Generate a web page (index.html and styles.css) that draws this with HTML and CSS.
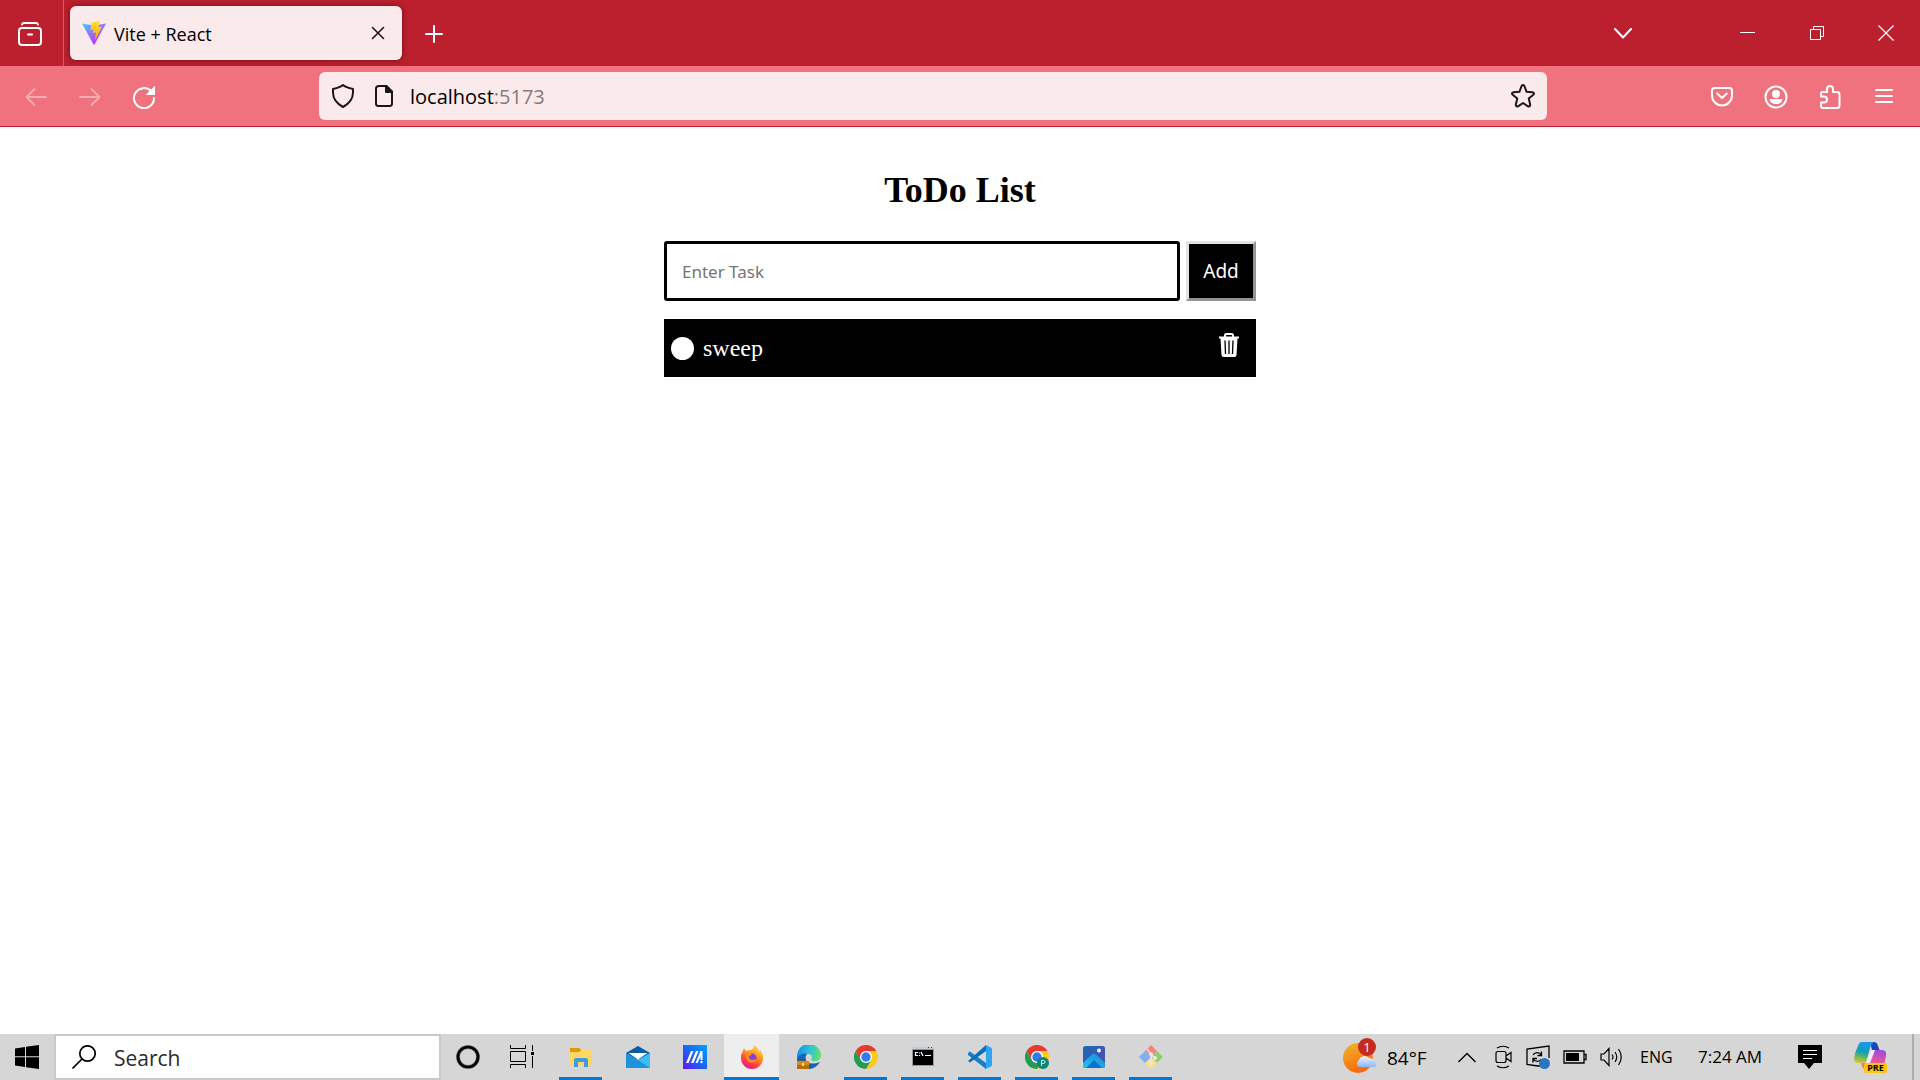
FILE: index.html
```html
<!DOCTYPE html>
<html lang="en">
<head>
<meta charset="utf-8">
<meta name="viewport" content="width=device-width, initial-scale=1">
<title>Vite + React</title>
<link rel="stylesheet" href="styles.css">
</head>
<body>
<header class="browser">
  <div class="tabbar">
    <button class="icon-btn library" aria-label="Firefox View">
      <svg width="24" height="24" viewBox="0 0 24 24" fill="none" stroke="#fff" stroke-width="2" stroke-linecap="round"><rect x="1" y="6" width="22" height="17" rx="3"/><path d="M4 2.500Q4.500 1 6 1H18Q19.500 1 20 2.500M10 12.500H14"/></svg>
    </button>
    <div class="tab">
      <svg width="24" height="24" viewBox="0 0 24 24">
        <defs>
          <linearGradient id="vite" x1="0" y1="0" x2=".6" y2="1"><stop offset="0" stop-color="#41d1ff"/><stop offset=".45" stop-color="#8a7cff"/><stop offset="1" stop-color="#bd34fe"/></linearGradient>
          <linearGradient id="bolt" x1="0" y1="0" x2="0" y2="1"><stop offset="0" stop-color="#ffdd35"/><stop offset="1" stop-color="#ffa800"/></linearGradient>
        </defs>
        <path d="M0 2.500L12 4.500L24 2.500L12.500 23.500Q12 24 11.500 23.500Z" fill="url(#vite)"/>
        <path d="M9.500 1.500L17.500 0L16.500 6L20 5.500L13 19.500L14 11.500L10.500 12L11.500 8.500L8.500 9Z" fill="url(#bolt)"/>
      </svg>
      <span class="tab-title">Vite + React</span>
      <button class="icon-btn tab-close" aria-label="Close tab">
        <svg width="14" height="14" viewBox="0 0 14 14" fill="none" stroke="#1b1718" stroke-width="1.600" stroke-linecap="round"><path d="M1.500 1.500L12.500 12.500M12.500 1.500L1.500 12.500"/></svg>
      </button>
    </div>
    <button class="icon-btn new-tab" aria-label="New tab">
      <svg width="18" height="18" viewBox="0 0 18 18" fill="none" stroke="#fff" stroke-width="2" stroke-linecap="round"><path d="M9 1V17M1 9H17"/></svg>
    </button>
    <div class="window-controls">
      <button class="icon-btn all-tabs" aria-label="List all tabs">
        <svg width="18" height="11" viewBox="0 0 18 11" fill="none" stroke="#fff" stroke-width="2" stroke-linecap="round" stroke-linejoin="round"><path d="M1 1L9 9.500L17 1"/></svg>
      </button>
      <button class="icon-btn" aria-label="Minimize"><svg width="16" height="16" viewBox="0 0 16 16" stroke="#fff"><path d="M0 7.500H15"/></svg></button>
      <button class="icon-btn" aria-label="Restore"><svg width="14" height="14" viewBox="0 0 14 14" fill="none" stroke="#fff"><path d="M.5 3.500H10.500V13.500H.5ZM3.500 3.500V.5H13.500V10.500H10.500"/></svg></button>
      <button class="icon-btn" aria-label="Close"><svg width="16" height="16" viewBox="0 0 16 16" stroke="#fff" stroke-width="1.200"><path d="M.5 .5L15.500 15.500M15.500 .5L.5 15.500"/></svg></button>
    </div>
  </div>
  <div class="toolbar">
    <div class="tool-group">
      <button class="icon-btn dim" aria-label="Back"><svg width="22" height="20" viewBox="0 0 22 20" fill="none" stroke="#fff" stroke-width="1.800" stroke-linecap="round" stroke-linejoin="round"><path d="M21 10H1.500M9.500 2L1.500 10L9.500 18"/></svg></button>
      <button class="icon-btn dim" aria-label="Forward"><svg width="22" height="20" viewBox="0 0 22 20" fill="none" stroke="#fff" stroke-width="1.800" stroke-linecap="round" stroke-linejoin="round"><path d="M1 10H20.500M12.500 2L20.500 10L12.500 18"/></svg></button>
      <button class="icon-btn" aria-label="Reload"><svg width="24" height="24" viewBox="0 0 24 24" fill="none" stroke="#fff" stroke-width="2" stroke-linecap="round"><path d="M19.500 6.500A10 10 0 1 0 22 13"/><path d="M22.500 2V9.500H15Z" fill="#fff" stroke-width="1" stroke-linejoin="round"/></svg></button>
    </div>
    <div class="urlbar">
      <svg width="24" height="24" viewBox="0 0 24 24" fill="none" stroke="#1b1718" stroke-width="2" stroke-linejoin="round"><path d="M12 1Q14.500 3.200 22 5V8.500Q22 17.500 12 23Q2 17.500 2 8.500V5Q9.500 3.200 12 1Z"/></svg>
      <svg width="18" height="22" viewBox="0 0 18 22" fill="none" stroke="#1b1718" stroke-width="2" stroke-linejoin="round"><path d="M4 1H11.500L17 6.500V18.500Q17 21 14.500 21H3.500Q1 21 1 18.500V3.500Q1 1 4 1Z"/><path d="M11 1V7H17Z" fill="#1b1718"/></svg>
      <span class="url">localhost<span class="port">:5173</span></span>
      <button class="icon-btn bookmark" aria-label="Bookmark this page"><svg width="24" height="24" viewBox="0 0 24 24" fill="none" stroke="#1b1718" stroke-width="2" stroke-linejoin="round"><path d="M10.600 2Q12 0 13.400 2L15.500 7.700L21.500 8.200Q24 8.900 22.300 10.700L17.700 14.600L19.200 20.500Q19.300 23 17 22.300L12 19L7 22.300Q4.700 23 4.800 20.500L6.300 14.600L1.700 10.700Q0 8.900 2.500 8.200L8.500 7.700Z"/></svg></button>
    </div>
    <div class="tool-group">
      <button class="icon-btn" aria-label="Save to Pocket"><svg width="22" height="22" viewBox="0 0 22 22" fill="none" stroke="#fff" stroke-width="2" stroke-linecap="round" stroke-linejoin="round"><path d="M3.500 2H18.500Q21 2 21 4.500V9.500A10 10 0 0 1 1 9.500V4.500Q1 2 3.500 2Z"/><path d="M6.200 7.500L11 12L15.800 7.500"/></svg></button>
      <button class="icon-btn" aria-label="Account"><svg width="24" height="24" viewBox="0 0 24 24" fill="none" stroke="#fff" stroke-width="2"><circle cx="12" cy="12" r="10.500"/><circle cx="12" cy="9" r="4" fill="#fff" stroke="none"/><path d="M5.500 14H18.500Q18 19 12 19Q6 19 5.500 14Z" fill="#fff" stroke="none"/></svg></button>
      <button class="icon-btn" aria-label="Extensions"><svg width="22" height="24" viewBox="0 0 22 24" fill="none" stroke="#fff" stroke-width="2" stroke-linejoin="round"><path d="M3.500 7H8V4A3 3 0 0 1 14 4V7H18Q20.500 7 20.500 9.500V20.500Q20.500 23 18 23H4Q2 23 2 21V17.500H5A3 3 0 0 0 5 11.500H2V8.500Q2 7 3.500 7Z"/></svg></button>
      <button class="icon-btn" aria-label="Open menu"><svg width="18" height="18" viewBox="0 0 18 18" stroke="#fff" stroke-width="2" stroke-linecap="round"><path d="M1 2H17M1 8H17M1 14H17"/></svg></button>
    </div>
  </div>
</header>

<main class="page">
  <section class="todo">
    <h1 class="todo-title">ToDo List</h1>
    <form class="todo-form">
      <input class="todo-input" type="text" placeholder="Enter Task" aria-label="Enter Task">
      <button class="todo-add" type="button">Add</button>
    </form>
    <ul class="todo-list">
      <li class="todo-item">
        <input class="todo-check" type="checkbox" id="task-1">
        <label class="todo-label" for="task-1">sweep</label>
        <button class="icon-btn todo-delete" aria-label="Delete sweep"><svg width="22" height="24" viewBox="0 0 22 24"><path d="M7 4V2.500Q7 1 8.500 1H13.500Q15 1 15 2.500V4" fill="none" stroke="#fff" stroke-width="2"/><path d="M1 3.500H21V5.500H19.500L18.500 22Q18.300 24 16.500 24H5.500Q3.700 24 3.500 22L2.500 5.500H1Z" fill="#fff"/><path d="M7 7.500L7.500 21M11 7.500V21M15 7.500L14.500 21" stroke="#000" stroke-width="1.300"/></svg></button>
      </li>
    </ul>
  </section>
</main>

<footer class="taskbar">
  <button class="icon-btn start" aria-label="Start"><svg width="24" height="24" viewBox="0 0 24 24"><path d="M0 3.400L10 2V11.200H0ZM11 1.800L24 0V11.200H11ZM0 12.200H10V22L0 20.600ZM11 12.200H24V24L11 22.200Z"/></svg></button>
  <label class="search">
    <svg width="24" height="24" viewBox="0 0 24 24" fill="none" stroke="#000" stroke-width="1.700"><circle cx="15.500" cy="8.500" r="7.700"/><path d="M10 14L.5 23.500"/></svg>
    <input class="search-input" type="text" placeholder="Search" aria-label="Search">
  </label>
  <div class="shell-buttons">
    <button class="icon-btn" aria-label="Cortana"><svg width="24" height="24" viewBox="0 0 24 24" fill="none"><circle cx="12" cy="12" r="10" stroke="#777" stroke-width="4"/><circle cx="12" cy="12" r="10" stroke="#000" stroke-width="2.600"/></svg></button>
    <button class="icon-btn" aria-label="Task View"><svg width="24" height="24" viewBox="0 0 24 24" fill="none" stroke="#000"><path d="M.5 0V3.500H15.500V0M.5 6.500H15.500V16.500H.5ZM.5 23V19.500H15.500V23M22.500 0V6M22.500 11V23"/><path d="M21 7H24V10H21Z" fill="#000" stroke="none"/></svg></button>
  </div>
  <div class="apps">
    <button class="app running" aria-label="File Explorer"><svg width="24" height="24" viewBox="0 0 24 24"><path d="M1 3H10L12 5V9H1Z" fill="#dc9b00"/><path d="M1 7H10L13 5H23V21H1Z" fill="#ffd764"/><path d="M5 22V15Q5 13 7 13H17Q19 13 19 15V22H15V17H9V22Z" fill="#409ae1"/></svg></button>
    <button class="app" aria-label="Mail"><svg width="24" height="24" viewBox="0 0 24 24"><path d="M0 8L12 1L24 8V14H0Z" fill="#0a5ca8"/><path d="M0 8L12 15L24 8V23H0Z" fill="#28a4e4"/><path d="M2.500 8H21.500L12 14.500Z" fill="#fff"/><path d="M12 15L24 23H0V8Z" fill="#1e93dc"/><path d="M12 15L24 8V23Z" fill="#39c0f0"/></svg></button>
    <button class="app" aria-label="MyASUS"><svg width="24" height="24" viewBox="0 0 24 24"><defs><linearGradient id="asus" x1="0" y1="1" x2="1" y2="0"><stop offset="0" stop-color="#6510f5"/><stop offset=".5" stop-color="#1767f5"/><stop offset="1" stop-color="#00a3ff"/></linearGradient></defs><path d="M0 0H24V24H0Z" fill="url(#asus)"/><path d="M3 18L8 6H10.500L5.500 18ZM8 18L13 6H15.500L10.500 18ZM12.500 18L17.500 6H19.500V15H17.500V11.500L14.500 18Z" fill="#fff"/><circle cx="18.500" cy="17" r="1.200" fill="#fff"/></svg></button>
    <button class="app running active" aria-label="Firefox"><svg width="24" height="24" viewBox="0 0 24 24"><defs><linearGradient id="fox" x1=".8" y1="0" x2=".3" y2="1"><stop offset="0" stop-color="#ffe33d"/><stop offset=".4" stop-color="#ff9a1f"/><stop offset=".7" stop-color="#ff463f"/><stop offset="1" stop-color="#e41586"/></linearGradient></defs><path d="M4 3L6 6Q8 5 11 5Q14 4 14 0Q18 2 19 7L20 5Q23 8 23 13A11 11 0 0 1 1 13Q1 9 2 7V9Q3 5 4 3Z" fill="url(#fox)"/><circle cx="12" cy="13" r="4.500" fill="#8b3de0"/><path d="M5 7Q9 7 12 9Q11 11 9 11Q8 14 12 15Q15 14 17 15Q14 19 9 17Q6 15 6 11Z" fill="#ff8b20"/></svg></button>
    <button class="app" aria-label="Edge"><svg width="24" height="24" viewBox="0 0 24 24"><defs><linearGradient id="edge" x1="0" y1=".4" x2="1" y2=".6"><stop offset="0" stop-color="#188fdc"/><stop offset=".5" stop-color="#31c3dc"/><stop offset="1" stop-color="#66e25e"/></linearGradient></defs><path d="M0 12A12 12 0 0 1 24 10Q24 16 18 16Q14 16 14 14Q16 13 14 10Q9 7 5 14L1 19Z" fill="url(#edge)"/><path d="M0 13Q4 7 10 9Q7 13 10 17Q15 20 23 17Q18 25 9 24L0 20Z" fill="#1366b4"/><path d="M0 16H12V24H0Z" fill="#b96b08"/><path d="M0 16H12V20H0Z" fill="#d98b19"/><path d="M5 18H7V21H5Z" fill="#ffdf79"/><path d="M4 16V14.500H8V16" fill="none" stroke="#76430a"/></svg></button>
    <button class="app running" aria-label="Chrome"><svg width="24" height="24" viewBox="0 0 24 24"><path d="M12 12V6H22.400A12 12 0 0 1 12 24L17.200 15Z" fill="#fdca1c"/><path d="M1.600 6A12 12 0 0 1 22.400 6H12V12L6.800 15Z" fill="#e33b2e"/><path d="M1.600 6L6.800 15L12 12L17.200 15L12 24A12 12 0 0 1 1.600 6Z" fill="#239c51"/><circle cx="12" cy="12" r="6" fill="#fff"/><circle cx="12" cy="12" r="4.700" fill="#337bea"/></svg></button>
    <button class="app running" aria-label="Command Prompt"><svg width="24" height="24" viewBox="0 0 24 24"><path d="M1 2H23V21H1Z" fill="#919aa5"/><path d="M1 2H23V4H1Z" fill="#c3ccd6"/><path d="M2 5H22V20H2Z" fill="#000"/><path d="M17 2.500H18M20 2.500H21" stroke="#345"/><path d="M7 7.500H4.500V10.500H7M8.500 7.500V8.500M8.500 10V11M10 7L12 11M14 10.500H20" fill="none" stroke="#fff" stroke-width="1.200"/></svg></button>
    <button class="app running" aria-label="Visual Studio Code"><svg width="24" height="24" viewBox="0 0 24 24"><path d="M0 8L2 6.500L18 18V24L0 10Z" fill="#167fc7"/><path d="M0 16L18 0V6L2 17.500Z" fill="#0b71b6"/><path d="M17 0Q18 0 19 .5L23 2.500Q24 3 24 4V20Q24 21 23 21.500L19 23.500Q18 24 17 23.500Q18 23 18 22V2Q18 1 17 0Z" fill="#2ca6f2"/></svg></button>
    <button class="app running" aria-label="Chrome, second profile"><svg width="24" height="24" viewBox="0 0 24 24"><path d="M12 12V6H22.400A12 12 0 0 1 12 24L17.200 15Z" fill="#fdca1c"/><path d="M1.600 6A12 12 0 0 1 22.400 6H12V12L6.800 15Z" fill="#e33b2e"/><path d="M1.600 6L6.800 15L12 12L17.200 15L12 24A12 12 0 0 1 1.600 6Z" fill="#239c51"/><circle cx="12" cy="12" r="6" fill="#fff"/><circle cx="12" cy="12" r="4.700" fill="#337bea"/><circle cx="18" cy="18" r="6" fill="#0b8577"/><path d="M16.500 21V15.500H18.500A1.500 1.500 0 0 1 18.500 18.500H16.500" fill="none" stroke="#d9f0ed"/></svg></button>
    <button class="app running" aria-label="Photos"><svg width="24" height="24" viewBox="0 0 24 24"><defs><linearGradient id="photo" x1="0" y1="0" x2="1" y2="1"><stop offset="0" stop-color="#1868b8"/><stop offset="1" stop-color="#5b4cad"/></linearGradient><linearGradient id="hill" x1="0" y1="1" x2="1" y2="0"><stop offset="0" stop-color="#27c2f2"/><stop offset="1" stop-color="#168bdd"/></linearGradient></defs><rect x="1" y="1" width="22" height="22" rx="2.500" fill="url(#photo)"/><path d="M1 18L10 9.500Q12 8 14 9.500L23 18V20.500Q23 23 20.500 23H3.500Q1 23 1 20.500Z" fill="url(#hill)"/><path d="M4 23L12 15L20 23Z" fill="#0872cc"/><circle cx="17" cy="5.500" r="2" fill="#eef5ff"/></svg></button>
    <button class="app running" aria-label="Git Bash"><svg width="24" height="24" viewBox="0 0 24 24"><path d="M12 0L18 6L12 12L6 6Z" fill="#f58080"/><path d="M18 6L24 12L18 18L12 12Z" fill="#8fcf69"/><path d="M12 12L18 18L12 24L6 18Z" fill="#fbdf80"/><path d="M6 6L12 12L6 18L0 12Z" fill="#82adf7"/><path d="M8 4L12 9V19M12 10L16 13" fill="none" stroke="#e7e7e7" stroke-width="1.600"/><circle cx="12" cy="9" r="2" fill="#e7e7e7"/><circle cx="12" cy="18" r="2" fill="#e7e7e7"/><circle cx="16" cy="13" r="2" fill="#e7e7e7"/></svg></button>
  </div>
  <div class="tray">
    <button class="weather" aria-label="Weather, 84°F, 1 alert">
      <span class="weather-icon">
        <svg width="34" height="34" viewBox="0 0 34 34"><defs><linearGradient id="sun" x1="0" y1="0" x2=".4" y2="1"><stop offset="0" stop-color="#f3b62c"/><stop offset="1" stop-color="#f76b0c"/></linearGradient><linearGradient id="cloud" x1="0" y1="0" x2="0" y2="1"><stop offset="0" stop-color="#eaf3ff"/><stop offset="1" stop-color="#8eb6f4"/></linearGradient></defs><circle cx="15" cy="18" r="15" fill="url(#sun)"/><path d="M16 27A4 4 0 0 1 16 20A6 6 0 0 1 26 18A5 5 0 0 1 31 21A3 3 0 0 1 30 27Z" fill="url(#cloud)"/></svg>
        <span class="badge">1</span>
      </span>
      <span class="temp">84°F</span>
    </button>
    <button class="icon-btn caret" aria-label="Show hidden icons"><svg width="18" height="11" viewBox="0 0 18 11" fill="none" stroke="#000" stroke-width="1.400"><path d="M.5 10L9 1.500L17.500 10"/></svg></button>
    <div class="status">
      <svg width="18" height="24" viewBox="0 0 18 24" fill="none" stroke="#000" stroke-width="1.200"><path d="M2 3Q8 -.5 14 3M2 21Q8 24.500 14 21M3 6.500H9Q11 6.500 11 8.500V15.500Q11 17.500 9 17.500H3Q1 17.500 1 15.500V8.500Q1 6.500 3 6.500ZM11 11L16 7.500V16.500L11 13"/></svg>
      <svg width="24" height="24" viewBox="0 0 24 24" fill="none" stroke="#000" stroke-width="1.300"><path d="M14 21H12L1 19.500V4L23 1V13"/><path d="M7 10A5 5 0 0 1 15.500 10M15.500 6.500V10.500H11.500M15.500 14A5 5 0 0 1 7 14M7 17.500V13.500H11"/><circle cx="18.500" cy="18.500" r="5.500" fill="#2a75c0" stroke="none"/></svg>
      <svg width="24" height="14" viewBox="0 0 24 14" fill="none" stroke="#000" stroke-width="1.300"><path d="M1 1H21V13H1ZM21 4.500H23V9.500H21"/><path d="M3 3H16V11H3Z" fill="#000" stroke="none"/></svg>
      <svg width="24" height="20" viewBox="0 0 24 20" fill="none" stroke="#000" stroke-width="1.200"><path d="M1 7H4L9 1.500V18.500L4 13H1ZM12 7.500Q14 10 12 12.500M15 5Q18.500 10 15 15M18.500 2Q24 10 18.500 18"/></svg>
    </div>
    <span class="lang">ENG</span>
    <time class="clock">7:24 AM</time>
    <button class="icon-btn notify" aria-label="Notifications"><svg width="24" height="24" viewBox="0 0 24 24"><path d="M0 0H24V18H16L11 24L6 18H0Z"/><path d="M5 5.500H19M5 9.500H19M5 13.500H14" stroke="#fff" stroke-width="1.200"/></svg></button>
    <button class="icon-btn copilot" aria-label="Copilot preview">
      <svg width="34" height="30" viewBox="0 0 34 30"><defs><linearGradient id="co1" x1=".3" y1="0" x2=".1" y2="1"><stop offset="0" stop-color="#1597ef"/><stop offset=".45" stop-color="#179fb0"/><stop offset=".7" stop-color="#70bb58"/><stop offset="1" stop-color="#e9c52a"/></linearGradient><linearGradient id="co2" x1=".6" y1="0" x2=".3" y2="1"><stop offset="0" stop-color="#a249de"/><stop offset=".6" stop-color="#f15993"/><stop offset="1" stop-color="#ff8c54"/></linearGradient></defs><path d="M16 0H20Q23 0 24 4L25.500 8H18Z" fill="#1648b5"/><path d="M8 0H20Q17 2 16 6L13 17Q12 21 8 21H4Q0 21 0 16Q1 10 4 4Q5 0 8 0Z" fill="url(#co1)"/><path d="M20 8H28Q33 8 32 14L30 23Q29 28 25 28H12Q8 27 7 21Q12 22 14 18L16 11Q17 8 20 8Z" fill="url(#co2)"/><path d="M17 8H21L16 21H12Z" fill="#f4eef4"/></svg>
      <span class="pre">PRE</span>
    </button>
    <span class="peek"></span>
  </div>
</footer>
</body>
</html>
```
FILE: styles.css
```css
* { box-sizing: border-box; }

body {
  margin: 0;
  min-height: 100vh;
  display: flex;
  flex-direction: column;
  background: #fff;
  color: #000;
  font-family: "Open Sans", "Noto Sans", sans-serif;
}

svg { display: block; flex: none; }

button, input { font-family: inherit; }

.icon-btn {
  display: flex;
  align-items: center;
  justify-content: center;
  padding: 0;
  border: 0;
  background: none;
}

/* Browser window */
.tabbar {
  display: flex;
  align-items: center;
  height: 66px;
  background: #bc202e;
}

.library {
  width: 64px;
  height: 66px;
  padding: 2px 4px 0 0;
  border-right: 1px solid #d1606a;
}

.tab {
  display: flex;
  align-items: center;
  width: 332px;
  height: 54px;
  margin-left: 6px;
  padding: 0 12px;
  border-radius: 6px;
  background: #faeaeb;
  box-shadow: 0 0 6px rgba(70, 0, 8, .6);
}

.tab-title {
  flex: 1;
  margin-left: 8px;
  padding-top: 2px;
  font-size: 18px;
  line-height: 24px;
}

.tab-close { width: 24px; height: 24px; }

.new-tab { width: 64px; height: 54px; padding-top: 2px; }

.window-controls {
  display: flex;
  margin-left: auto;
}

.window-controls .icon-btn { width: 69px; height: 66px; }

.window-controls .all-tabs { width: 60px; margin-right: 60px; }

.toolbar {
  display: flex;
  align-items: center;
  justify-content: space-between;
  height: 61px;
  padding: 0 9px;
  background: #f0727e;
  border-bottom: 1px solid #bc202e;
}

.tool-group { display: flex; padding-top: 2px; }

.tool-group .icon-btn { width: 54px; height: 48px; }

.dim { opacity: .4; }

.urlbar {
  flex: 1;
  display: flex;
  align-items: center;
  height: 48px;
  margin: 0 148px;
  padding: 0 12px;
  gap: 20px;
  border-radius: 6px;
  background: #faeaeb;
}

.url {
  flex: 1;
  margin-left: -3px;
  padding-top: 2px;
  font-size: 20px;
  line-height: 28px;
}

.port { color: #85797b; }

.bookmark { width: 24px; height: 24px; }

/* Todo page */
.page {
  flex: 1;
  padding: 42px 16px;
}

.todo {
  width: 100%;
  max-width: 592px;
  margin: 0 auto;
  font-family: "Liberation Serif", "Times New Roman", serif;
}

.todo-title {
  margin: 0 0 30px;
  font-size: 36px;
  line-height: 42px;
  text-align: center;
}

.todo-form {
  display: flex;
  gap: 6px;
  margin-bottom: 18px;
}

.todo-input {
  flex: 1;
  min-width: 0;
  height: 60px;
  padding: 0 15px;
  border: 3px solid #000;
  border-radius: 3px;
  font-family: "Noto Sans", sans-serif;
  font-size: 17px;
}

.todo-input::placeholder { color: #757575; opacity: 1; }

.todo-add {
  width: 70px;
  height: 60px;
  padding: 0;
  border: 3px solid;
  border-color: #e3e3e3 #949494 #949494 #e3e3e3;
  background: #000;
  color: #fff;
  font-family: "Noto Sans", sans-serif;
  font-size: 19px;
}

.todo-list {
  margin: 0;
  padding: 0;
  list-style: none;
}

.todo-item {
  display: flex;
  align-items: center;
  height: 58px;
  padding: 0 16px 0 7px;
  background: #000;
  color: #fff;
}

.todo-check {
  appearance: none;
  width: 23px;
  height: 23px;
  margin: 0 9px 0 0;
  border-radius: 50%;
  background: #fff;
}

.todo-label {
  flex: 1;
  font-size: 24px;
  line-height: 28px;
}

.todo-delete {
  align-self: flex-start;
  padding-top: 14px;
}

/* Windows taskbar */
.taskbar {
  display: flex;
  align-items: stretch;
  height: 46px;
  background: #d6d6d6;
}

.start { width: 54px; }

.search {
  display: flex;
  align-items: center;
  gap: 18px;
  width: 387px;
  padding: 0 16px;
  border: 2px solid #c9c9c9;
  background: #fff;
}

.search-input {
  flex: 1;
  min-width: 0;
  padding: 2px 0 0;
  border: 0;
  outline: 0;
  background: none;
  font-size: 21px;
}

.search-input::placeholder { color: #2b2b2b; opacity: 1; }

.shell-buttons { display: flex; }

.shell-buttons .icon-btn { width: 54px; }

.apps {
  display: flex;
  gap: 2px;
  margin-left: 4px;
}

.app {
  display: flex;
  flex-direction: column;
  align-items: center;
  width: 55px;
  padding: 11px 0 0;
  border: 0;
  background: none;
}

.running::after {
  content: "";
  width: 43px;
  height: 3px;
  margin-top: auto;
  background: #0078d7;
}

.active { background: #eee; }

.active::after { width: 100%; }

.tray {
  display: flex;
  align-items: center;
  margin-left: auto;
}

.weather {
  display: flex;
  align-items: center;
  gap: 10px;
  padding: 0;
  border: 0;
  background: none;
  color: #000;
}

.weather-icon { position: relative; }

.badge {
  position: absolute;
  top: -2px;
  right: 1px;
  width: 18px;
  height: 18px;
  border-radius: 50%;
  background: #c42b1c;
  color: #fff;
  font-size: 13px;
  line-height: 18px;
  text-align: center;
}

.temp {
  width: 43px;
  padding-top: 2px;
  font-size: 19px;
  line-height: 24px;
  text-align: left;
}

.caret { width: 18px; margin: 0 19px 0 28px; }

.status {
  display: flex;
  align-items: center;
  gap: 13px;
}

.lang {
  width: 34px;
  margin-left: 16px;
  font-size: 16px;
  line-height: 24px;
}

.clock {
  width: 68px;
  margin-left: 24px;
  font-size: 17px;
  line-height: 24px;
  white-space: nowrap;
}

.notify { width: 24px; margin: 0 32px; }

.copilot { position: relative; width: 34px; }

.pre {
  position: absolute;
  right: 1px;
  bottom: -1px;
  width: 23px;
  height: 10px;
  border-radius: 2px;
  background: #ffc40d;
  color: #000;
  font-size: 9px;
  font-weight: 700;
  line-height: 10px;
  text-align: center;
}

.peek {
  align-self: stretch;
  width: 8px;
  margin-left: 24px;
  border-left: 2px solid #adadad;
}
```
